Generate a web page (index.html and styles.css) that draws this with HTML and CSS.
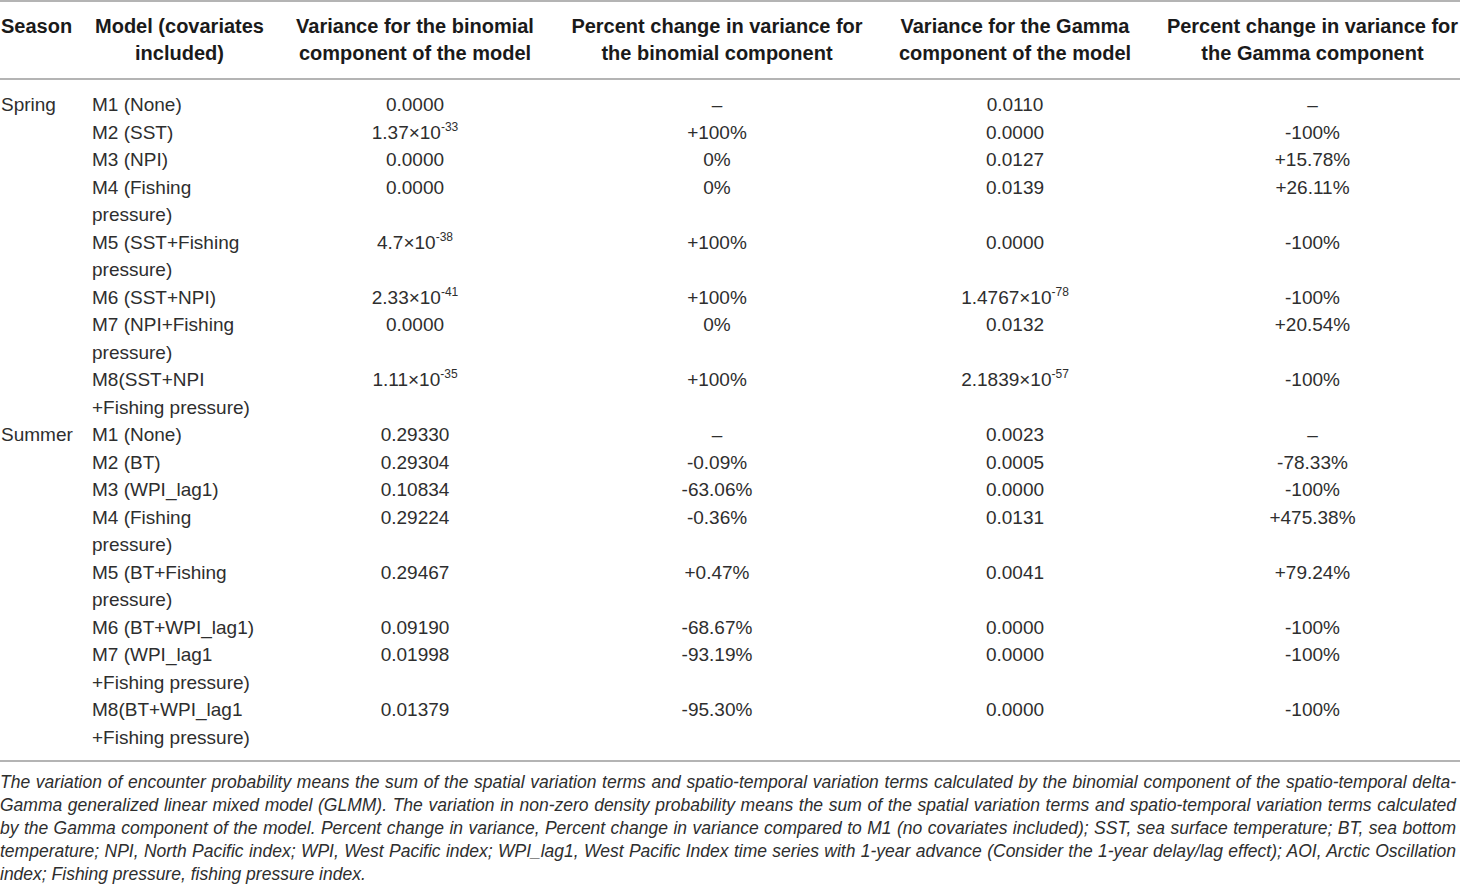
FILE: index.html
```html
<!DOCTYPE html>
<html>
<head>
<meta charset="utf-8">
<link rel="stylesheet" href="styles.css">
</head>
<body>
<table class="tbl">
  <colgroup>
    <col class="c-season">
    <col class="c-model">
    <col class="c-v1">
    <col class="c-p1">
    <col class="c-v2">
    <col class="c-p2">
  </colgroup>
  <thead>
    <tr>
      <th class="left">Season</th>
      <th>Model (covariates<br>included)</th>
      <th>Variance for the binomial<br>component of the model</th>
      <th>Percent change in variance for<br>the binomial component</th>
      <th>Variance for the Gamma<br>component of the model</th>
      <th class="last">Percent change in variance for<br>the Gamma component</th>
    </tr>
  </thead>
  <tbody class="grp first">
    <tr>
      <td class="season" rowspan="8">Spring</td>
      <td class="model">M1 (None)</td><td>0.0000</td><td>–</td><td>0.0110</td><td class="last">–</td>
    </tr>
    <tr><td class="model">M2 (SST)</td><td>1.37×10<sup>-33</sup></td><td>+100%</td><td>0.0000</td><td class="last">-100%</td></tr>
    <tr><td class="model">M3 (NPI)</td><td>0.0000</td><td>0%</td><td>0.0127</td><td class="last">+15.78%</td></tr>
    <tr><td class="model">M4 (Fishing<br>pressure)</td><td>0.0000</td><td>0%</td><td>0.0139</td><td class="last">+26.11%</td></tr>
    <tr><td class="model">M5 (SST+Fishing<br>pressure)</td><td>4.7×10<sup>-38</sup></td><td>+100%</td><td>0.0000</td><td class="last">-100%</td></tr>
    <tr><td class="model">M6 (SST+NPI)</td><td>2.33×10<sup>-41</sup></td><td>+100%</td><td>1.4767×10<sup>-78</sup></td><td class="last">-100%</td></tr>
    <tr><td class="model">M7 (NPI+Fishing<br>pressure)</td><td>0.0000</td><td>0%</td><td>0.0132</td><td class="last">+20.54%</td></tr>
    <tr><td class="model">M8(SST+NPI<br>+Fishing pressure)</td><td>1.11×10<sup>-35</sup></td><td>+100%</td><td>2.1839×10<sup>-57</sup></td><td class="last">-100%</td></tr>
  </tbody>
  <tbody class="grp last-grp">
    <tr>
      <td class="season" rowspan="8">Summer</td>
      <td class="model">M1 (None)</td><td>0.29330</td><td>–</td><td>0.0023</td><td class="last">–</td>
    </tr>
    <tr><td class="model">M2 (BT)</td><td>0.29304</td><td>-0.09%</td><td>0.0005</td><td class="last">-78.33%</td></tr>
    <tr><td class="model">M3 (WPI_lag1)</td><td>0.10834</td><td>-63.06%</td><td>0.0000</td><td class="last">-100%</td></tr>
    <tr><td class="model">M4 (Fishing<br>pressure)</td><td>0.29224</td><td>-0.36%</td><td>0.0131</td><td class="last">+475.38%</td></tr>
    <tr><td class="model">M5 (BT+Fishing<br>pressure)</td><td>0.29467</td><td>+0.47%</td><td>0.0041</td><td class="last">+79.24%</td></tr>
    <tr><td class="model">M6 (BT+WPI_lag1)</td><td>0.09190</td><td>-68.67%</td><td>0.0000</td><td class="last">-100%</td></tr>
    <tr><td class="model">M7 (WPI_lag1<br>+Fishing pressure)</td><td>0.01998</td><td>-93.19%</td><td>0.0000</td><td class="last">-100%</td></tr>
    <tr><td class="model">M8(BT+WPI_lag1<br>+Fishing pressure)</td><td>0.01379</td><td>-95.30%</td><td>0.0000</td><td class="last">-100%</td></tr>
  </tbody>
</table>
<p class="note">
  <span class="line">The variation of encounter probability means the sum of the spatial variation terms and spatio-temporal variation terms calculated by the binomial component of the spatio-temporal delta-</span>
  <span class="line">Gamma generalized linear mixed model (GLMM). The variation in non-zero density probability means the sum of the spatial variation terms and spatio-temporal variation terms calculated</span>
  <span class="line">by the Gamma component of the model. Percent change in variance, Percent change in variance compared to M1 (no covariates included); SST, sea surface temperature; BT, sea bottom</span>
  <span class="line">temperature; NPI, North Pacific index; WPI, West Pacific index; WPI_lag1, West Pacific Index time series with 1-year advance (Consider the 1-year delay/lag effect); AOI, Arctic Oscillation</span>
  <span class="line end">index; Fishing pressure, fishing pressure index.</span>
</p>
</body>
</html>
```

FILE: styles.css
```css
html, body {
  margin: 0;
  padding: 0;
  background: #ffffff;
}

body {
  font-family: "Liberation Sans", Arial, Helvetica, sans-serif;
  color: #2e2e2e;
}

.tbl {
  width: 1460px;
  table-layout: fixed;
  border-collapse: collapse;
  border-top: 2px solid #b4b4b4;
  border-bottom: 2px solid #b4b4b4;
}

.c-season { width: 92px; }
.c-model { width: 175px; }
.c-v1 { width: 296px; }
.c-p1 { width: 308px; }
.c-v2 { width: 288px; }
.c-p2 { width: 301px; }

thead th {
  font-size: 20px;
  font-weight: bold;
  line-height: 27px;
  color: #1a1a1a;
  text-align: center;
  white-space: nowrap;
  padding: 11px 0 11px 0;
  border-bottom: 2px solid #b4b4b4;
  vertical-align: top;
}

thead th.left {
  text-align: left;
  padding-left: 1px;
}

thead th.last,
td.last {
  padding-left: 6px;
}

td {
  font-size: 19px;
  line-height: 27.5px;
  text-align: center;
  vertical-align: top;
  padding: 0;
  white-space: nowrap;
}

td.season {
  text-align: left;
  padding-left: 1px;
}

td.model {
  text-align: left;
}

sup {
  font-size: 12px;
  line-height: 0;
  vertical-align: 8px;
}

.grp.first tr:first-child td {
  padding-top: 11px;
}

.grp.last-grp tr:last-child td {
  padding-bottom: 9px;
}

.grp.first tr:first-child td.last,
.grp.last-grp tr:last-child td.last {
  padding-left: 6px;
}

.note {
  margin: 9px 0 0 0;
  width: 1456px;
  font-size: 17.5px;
  line-height: 23px;
  font-style: italic;
  color: #2e2e2e;
  letter-spacing: 0;
}

.note .line {
  display: block;
  white-space: nowrap;
  text-align: justify;
  text-align-last: justify;
}

.note .line.end {
  text-align-last: left;
}
```
